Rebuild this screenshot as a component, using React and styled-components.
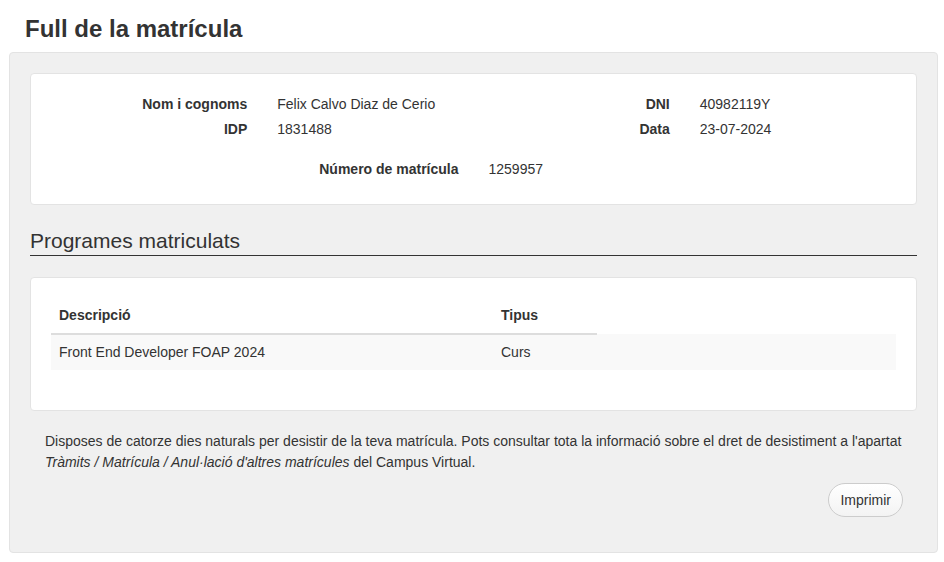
import React from 'react'
import styled, { createGlobalStyle } from 'styled-components'

const GlobalStyle = createGlobalStyle`
  html, body {
    margin: 0;
    padding: 0;
    background: #fff;
  }
  body {
    font-family: "Liberation Sans", Arial, sans-serif;
    font-size: 14px;
    line-height: 20px;
    color: #333;
  }
  * { box-sizing: border-box; }
`;

const Page = styled.div`
  margin: 0 6px 0 9px;
  padding-top: 16px;
  padding-bottom: 10px;
`;

const Title = styled.h1`
  font-size: 24px;
  line-height: 26px;
  font-weight: 700;
  margin: 0 0 10px 16px;
  color: #333;
`;

const Well = styled.div`
  background: #f0f0f0;
  border: 1px solid #e3e3e3;
  border-radius: 4px;
  padding: 20px 20px 35px;
`;

const Card = styled.div`
  background: #fff;
  border: 1px solid #e3e3e3;
  border-radius: 4px;
  padding: ${p => p.$pad || '20px'};
`;

const PairGrid = styled.div`
  display: grid;
  grid-template-columns: 1fr 1fr;
  margin-bottom: 15px;
`;

const Field = styled.div`
  display: grid;
  grid-template-columns: 1fr 1fr;
  margin-bottom: ${p => (p.$last ? '0' : '5px')};
`;

const Label = styled.div`
  font-weight: 700;
  text-align: right;
  padding-right: 15px;
`;

const Value = styled.div`
  padding-left: 15px;
`;

const SectionTitle = styled.h2`
  font-size: 21px;
  line-height: 22px;
  font-weight: 400;
  margin: 25px 0 21px;
  padding-bottom: 3px;
  border-bottom: 1px solid #333;
  color: #333;
`;

const Table = styled.table`
  width: 100%;
  border-collapse: collapse;
  border-spacing: 0;
`;

const Th = styled.th`
  text-align: left;
  font-weight: 700;
  padding: 8px;
  line-height: 19px;
  border-bottom: ${p => (p.$plain ? 'none' : '2px solid #ddd')};
`;

const Td = styled.td`
  padding: 8px;
  line-height: 19px;
  background: #f9f9f9;
`;

const Footer = styled.div`
  padding: 20px 14px 0 15px;
  display: flex;
  flex-direction: column;
`;

const Notice = styled.p`
  margin: 0;
  line-height: 21px;
`;

const Actions = styled.div`
  display: flex;
  justify-content: flex-end;
  margin-top: 10px;
`;

const Button = styled.button`
  font-family: inherit;
  font-size: 14px;
  line-height: 20px;
  color: #333;
  padding: 6px 11px;
  height: 34px;
  border: 1px solid #ccc;
  border-radius: 17px;
  background: linear-gradient(#fff, #f3f3f3);
  cursor: pointer;
`;

const info = [
  [['Nom i cognoms', 'Felix Calvo Diaz de Cerio'], ['IDP', '1831488']],
  [['DNI', '40982119Y'], ['Data', '23-07-2024']],
]

export default function App() {
  return (
    <Page>
      <GlobalStyle />
      <Title>Full de la matrícula</Title>
      <Well>
        <Card $pad="20px 20px 25px">
          <PairGrid>
            {info.map((col, i) => (
              <div key={i}>
                {col.map(([l, v]) => (
                  <Field key={l}>
                    <Label>{l}</Label>
                    <Value>{v}</Value>
                  </Field>
                ))}
              </div>
            ))}
          </PairGrid>
          <Field $last>
            <Label>Número de matrícula</Label>
            <Value>1259957</Value>
          </Field>
        </Card>

        <SectionTitle>Programes matriculats</SectionTitle>

        <Card>
          <Table>
            <colgroup>
              <col style={{ width: 442 }} />
              <col style={{ width: 104 }} />
              <col />
            </colgroup>
            <thead>
              <tr>
                <Th>Descripció</Th>
                <Th>Tipus</Th>
                <Th $plain />
              </tr>
            </thead>
            <tbody>
              <tr>
                <Td>Front End Developer FOAP 2024</Td>
                <Td>Curs</Td>
                <Td />
              </tr>
            </tbody>
          </Table>
          <div style={{ height: 20 }} />
        </Card>

        <Footer>
          <Notice>
            Disposes de catorze dies naturals per desistir de la teva matrícula. Pots consultar tota la informació sobre el dret de desistiment a l'apartat{' '}
            <em>Tràmits / Matrícula / Anul·lació d'altres matrícules</em> del Campus Virtual.
          </Notice>
          <Actions>
            <Button>Imprimir</Button>
          </Actions>
        </Footer>
      </Well>
    </Page>
  )
}
